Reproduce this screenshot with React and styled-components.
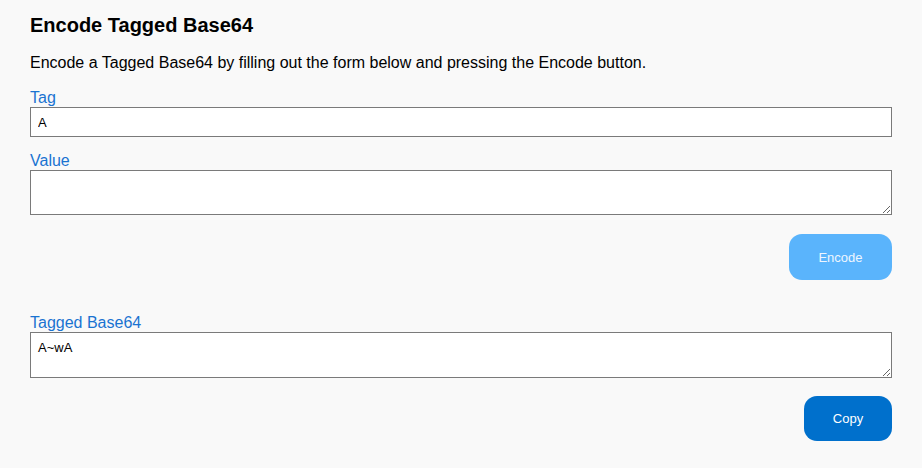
import styled, { createGlobalStyle } from "styled-components";

const GlobalStyle = createGlobalStyle`
  html, body {
    margin: 0;
    padding: 0;
    background-color: #f9f9f9;
  }
  body {
    font-family: "Liberation Sans", Arial, sans-serif;
    color: #000;
  }
`;

const Page = styled.div`
  padding: 14px 30px 26px;
  display: flex;
  flex-direction: column;
`;

const Title = styled.h3`
  margin: 0;
  font-size: 20px;
  line-height: 23px;
  font-weight: bold;
`;

const Intro = styled.p`
  margin: 17px 0 16px;
  font-size: 16px;
  line-height: 18px;
`;

const Field = styled.label`
  display: flex;
  flex-direction: column;
  margin-top: ${(p) => p.$top || 0}px;
`;

const LabelText = styled.span`
  color: #1a73d1;
  font-size: 16px;
  line-height: 16px;
  padding-top: 2px;
  height: 19px;
  box-sizing: border-box;
`;

const TextInput = styled.input`
  box-sizing: border-box;
  height: 30px;
  width: 100%;
  border: 1px solid #7a7a7a;
  background: #fff;
  padding: 0 7px;
  font-family: "Liberation Sans", Arial, sans-serif;
  font-size: 13px;
  color: #000;
  outline: none;
`;

const TextArea = styled.textarea`
  box-sizing: border-box;
  height: ${(p) => p.$height}px;
  width: 100%;
  border: 1px solid #7a7a7a;
  background: #fff;
  padding: 7px 7px;
  font-family: "Liberation Sans", Arial, sans-serif;
  font-size: 13px;
  line-height: 16px;
  color: #000;
  outline: none;
  resize: vertical;
  display: block;
`;

const Actions = styled.div`
  display: flex;
  justify-content: flex-end;
  margin-top: ${(p) => p.$top}px;
`;

const Button = styled.button`
  box-sizing: border-box;
  width: ${(p) => p.$width}px;
  height: ${(p) => p.$height}px;
  border: none;
  border-radius: 13px;
  background-color: ${(p) => (p.$disabled ? "#5ab4fc" : "#0070cc")};
  color: ${(p) => (p.$disabled ? "#eef6ff" : "#ffffff")};
  font-family: "Liberation Sans", Arial, sans-serif;
  font-size: 13px;
  cursor: pointer;
`;

export default function App() {
  return (
    <>
      <GlobalStyle />
      <Page>
        <Title>Encode Tagged Base64</Title>
        <Intro>
          Encode a Tagged Base64 by filling out the form below and pressing the Encode button.
        </Intro>
        <Field>
          <LabelText>Tag</LabelText>
          <TextInput defaultValue="A" />
        </Field>
        <Field $top={14}>
          <LabelText>Value</LabelText>
          <TextArea $height={45} />
        </Field>
        <Actions $top={19}>
          <Button $width={103} $height={46} $disabled>
            Encode
          </Button>
        </Actions>
        <Field $top={33}>
          <LabelText>Tagged Base64</LabelText>
          <TextArea $height={46} defaultValue="A~wA" />
        </Field>
        <Actions $top={18}>
          <Button $width={88} $height={45}>
            Copy
          </Button>
        </Actions>
      </Page>
    </>
  );
}
